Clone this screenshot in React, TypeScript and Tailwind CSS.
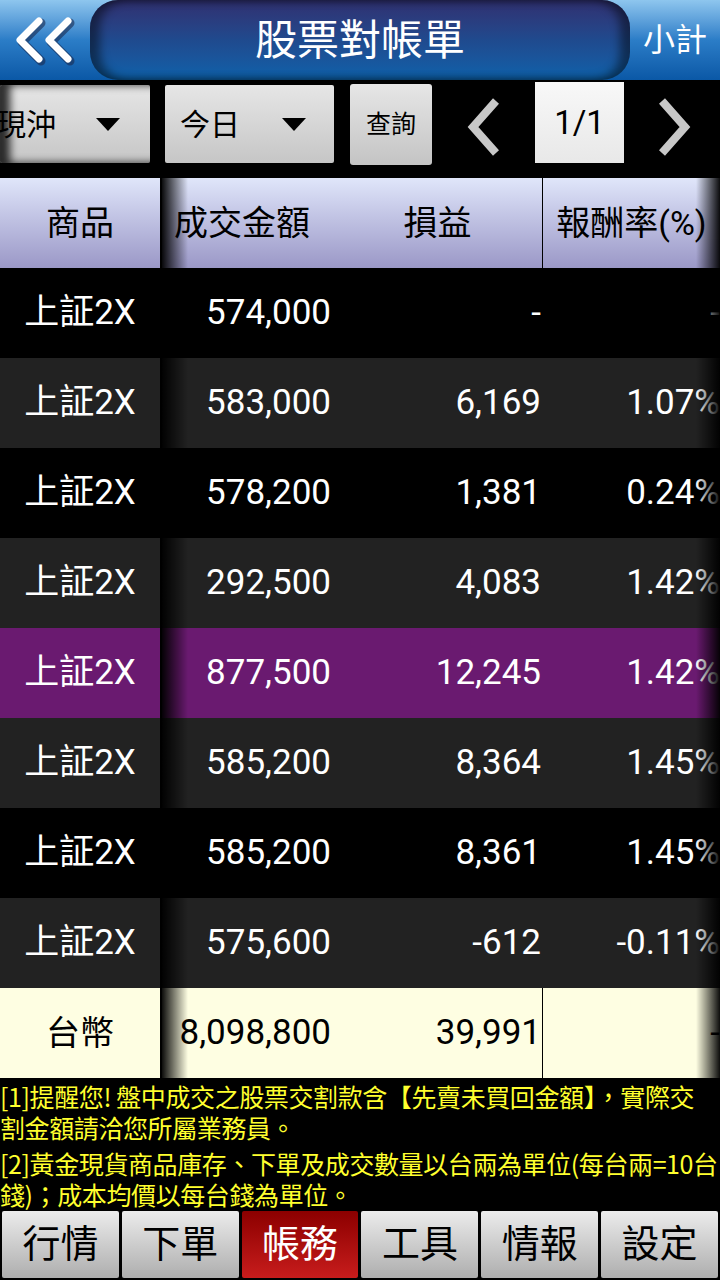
import React from "react";

const rows = [
  { name: "上証2X", amount: "574,000", pnl: "-", rate: "-", bg: "bg-black" },
  { name: "上証2X", amount: "583,000", pnl: "6,169", rate: "1.07%", bg: "bg-[#222222]" },
  { name: "上証2X", amount: "578,200", pnl: "1,381", rate: "0.24%", bg: "bg-black" },
  { name: "上証2X", amount: "292,500", pnl: "4,083", rate: "1.42%", bg: "bg-[#222222]" },
  { name: "上証2X", amount: "877,500", pnl: "12,245", rate: "1.42%", bg: "bg-[#6a1a70]" },
  { name: "上証2X", amount: "585,200", pnl: "8,364", rate: "1.45%", bg: "bg-[#222222]" },
  { name: "上証2X", amount: "585,200", pnl: "8,361", rate: "1.45%", bg: "bg-black" },
  { name: "上証2X", amount: "575,600", pnl: "-612", rate: "-0.11%", bg: "bg-[#222222]" },
];

const tabs = ["行情", "下單", "帳務", "工具", "情報", "設定"];

const font = { fontFamily: 'Roboto, "Noto Sans CJK TC", sans-serif' };

function Triangle() {
  return (
    <svg width="24" height="13" viewBox="0 0 24 13">
      <polygon points="0,0 24,0 12,13" fill="#000" />
    </svg>
  );
}

function Chevron({ dir }: { dir: "left" | "right" }) {
  return (
    <svg width="34" height="60" viewBox="0 0 34 60">
      <polyline
        points={dir === "left" ? "29,4 6,30 29,56" : "5,4 28,30 5,56"}
        fill="none"
        stroke="#c8c8c8"
        strokeWidth="8"
        strokeLinejoin="miter"
      />
    </svg>
  );
}

export default function App() {
  return (
    <div className="w-[720px] h-[1280px] bg-black overflow-hidden text-white" style={font}>
      {/* 標題列 */}
      <div className="h-[80px] flex bg-linear-to-b from-[#8ec6ee] via-[#2b7dc7] to-[#0a58a6]">
        <div className="w-[90px] flex items-center justify-center">
          <svg width="70" height="56" viewBox="0 0 70 56">
            <g fill="none" stroke="#1a2a50" strokeWidth="9" strokeLinecap="round" strokeLinejoin="round" opacity="0.6">
              <polyline points="31,11 12,30 31,49" />
              <polyline points="60,11 41,30 60,49" />
            </g>
            <g fill="none" stroke="#fff" strokeWidth="7" strokeLinecap="round" strokeLinejoin="round">
              <polyline points="29,9 10,28 29,47" />
              <polyline points="58,9 39,28 58,47" />
            </g>
          </svg>
        </div>
        <div className="flex-1 rounded-[28px] bg-linear-to-b from-[#2f3070] via-[#1f4a8e] to-[#0c62ab] shadow-[inset_10px_0_10px_rgba(0,0,0,0.45),inset_-10px_0_10px_rgba(0,0,0,0.45)] flex items-center justify-center">
          <span className="text-[42px] leading-none mt-[2px]">股票對帳單</span>
        </div>
        <div className="w-[90px] flex items-center justify-center">
          <span className="text-[32px] leading-none">小計</span>
        </div>
      </div>

      {/* 查詢條件 */}
      <div className="h-[98px] flex items-start">
        <div className="mt-[5px] w-[150px] h-[78px] bg-linear-to-b from-[#e6e6e6] to-[#c6c6c6] shadow-[inset_10px_0_8px_rgba(0,0,0,0.8)] rounded-[2px] flex items-center overflow-hidden text-black">
          <span className="text-[30px] ml-[-4px] w-[100px] whitespace-nowrap">現沖</span>
          <Triangle />
        </div>
        <div className="ml-[15px] mt-[5px] w-[169px] h-[78px] bg-linear-to-b from-[#e6e6e6] to-[#c6c6c6] rounded-[2px] flex items-center text-black">
          <span className="text-[30px] ml-[15px] w-[102px]">今日</span>
          <Triangle />
        </div>
        <div className="ml-[16px] mt-[4px] w-[82px] h-[81px] bg-linear-to-b from-[#e6e6e6] to-[#c4c4c4] rounded-[3px] flex items-center justify-center text-black">
          <span className="text-[25px]">查詢</span>
        </div>
        <div className="ml-[35px] mt-[17px]">
          <Chevron dir="left" />
        </div>
        <div className="ml-[34px] mt-[2px] w-[89px] h-[81px] bg-linear-to-b from-[#f8f8f8] to-[#e8e8e8] flex items-center justify-center text-black">
          <span className="text-[33px]">1/1</span>
        </div>
        <div className="ml-[33px] mt-[17px]">
          <Chevron dir="right" />
        </div>
      </div>

      {/* 表格 */}
      <div className="flex">
        <div className="w-[160px] flex flex-col">
          <div className="h-[90px] bg-linear-to-b from-[#e0e6fa] to-[#9b98c7] flex items-center justify-center text-black text-[34px]">
            商品
          </div>
          {rows.map((r, i) => (
            <div key={i} className={`h-[90px] ${r.bg} flex items-center justify-center text-[35px]`}>
              {r.name}
            </div>
          ))}
          <div className="h-[90px] bg-[#fefee2] flex items-center justify-center text-black text-[34px]">台幣</div>
        </div>
        <div className="w-[2px] bg-black" />
        <div className="relative flex-1 overflow-hidden flex flex-col">
          <div className="h-[90px] bg-linear-to-b from-[#e0e6fa] to-[#9b98c7] flex items-center text-black text-[34px]">
            <div className="w-[183px] pl-[12px] whitespace-nowrap">成交金額</div>
            <div className="w-[197px] text-center pr-[12px]">損益</div>
            <div className="w-[178px] border-l border-black h-full flex items-center justify-center whitespace-nowrap">報酬率(%)</div>
          </div>
          {rows.map((r, i) => (
            <div key={i} className={`h-[90px] ${r.bg} flex items-center text-[35px]`}>
              <div className="w-[183px] text-right pr-[14px]">{r.amount}</div>
              <div className="w-[197px] text-right pr-[1px]">{r.pnl}</div>
              <div className="w-[178px] text-right whitespace-nowrap">{r.rate}</div>
            </div>
          ))}
          <div className="h-[90px] bg-[#fefee2] flex items-center text-black text-[35px]">
            <div className="w-[183px] text-right pr-[14px]">8,098,800</div>
            <div className="w-[197px] text-right pr-[1px]">39,991</div>
            <div className="w-[178px] border-l border-black h-full flex items-center justify-end">-</div>
          </div>
          <div className="absolute left-0 top-0 bottom-0 w-[26px] bg-linear-to-r from-[rgba(0,0,0,0.95)] to-transparent" />
          <div className="absolute right-0 top-0 bottom-0 w-[24px] bg-linear-to-r from-transparent to-[rgba(0,0,0,0.95)]" />
        </div>
      </div>

      {/* 說明 */}
      <div className="h-[132px] pt-[3px] text-[#ffff2e] text-[25px] leading-[31px] tracking-[-0.4px]" style={{ fontFamily: '"Noto Sans CJK TC", Roboto, sans-serif' }}>
        <p className="whitespace-nowrap">[1]提醒您! 盤中成交之股票交割款含【先賣未買回金額】，實際交</p>
        <p className="whitespace-nowrap">割金額請洽您所屬業務員。</p>
        <p className="whitespace-nowrap mt-[5px]">[2]黃金現貨商品庫存、下單及成交數量以台兩為單位(每台兩=10台</p>
        <p className="whitespace-nowrap">錢)；成本均價以每台錢為單位。</p>
      </div>

      {/* 底部選單 */}
      <div className="h-[70px] flex gap-[3px] px-[2px] pt-[1px] pb-[2px]">
        {tabs.map((t) => (
          <div
            key={t}
            className={
              t === "帳務"
                ? "flex-1 rounded-[2px] bg-linear-to-b from-[#8c0000] to-[#c81c1c] flex items-center justify-center text-white text-[38px]"
                : "flex-1 rounded-[2px] bg-linear-to-b from-[#ececec] to-[#aeaeae] flex items-center justify-center text-black text-[38px]"
            }
          >
            {t}
          </div>
        ))}
      </div>
    </div>
  );
}
